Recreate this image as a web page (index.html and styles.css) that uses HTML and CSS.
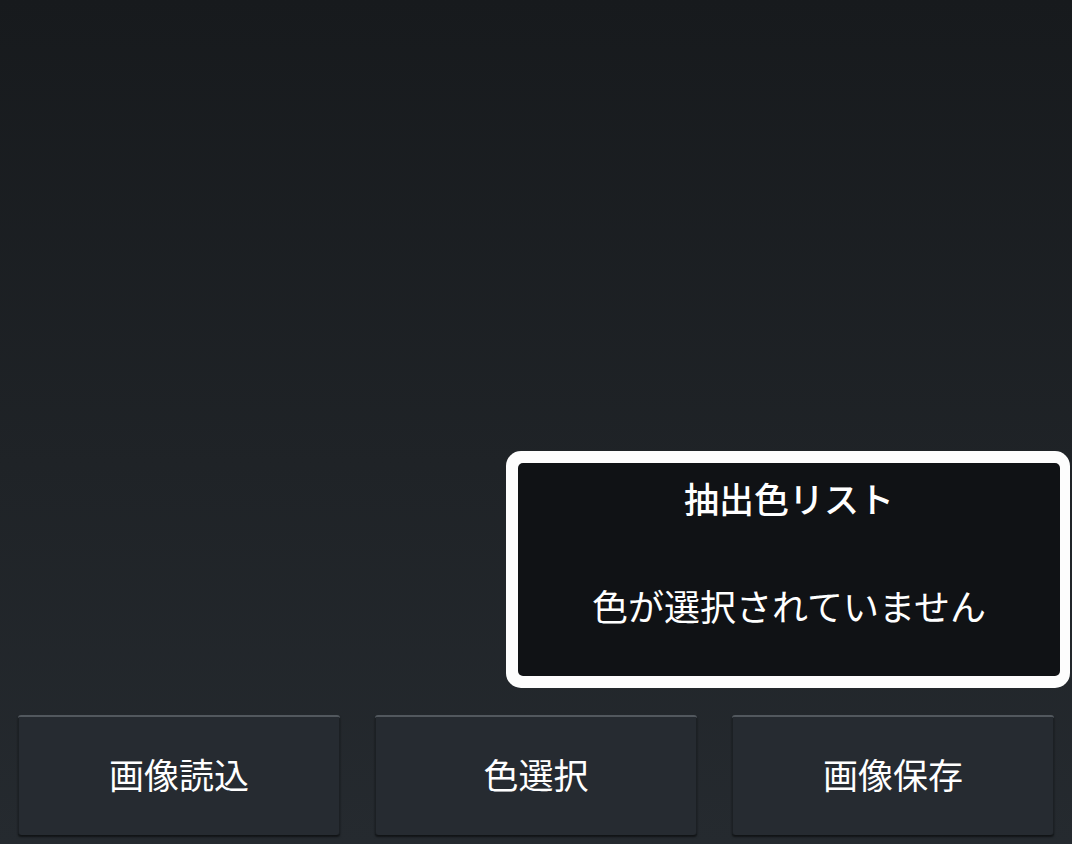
FILE: index.html
```html
<!DOCTYPE html>
<html lang="ja">
<head>
<meta charset="utf-8">
<title>抽出色リスト</title>
<link rel="stylesheet" href="styles.css">
</head>
<body>
<div class="app">
  <div class="canvas"></div>
  <section class="panel">
    <div class="panel-inner">
      <h2 class="panel-title">抽出色リスト</h2>
      <p class="panel-msg">色が選択されていません</p>
    </div>
  </section>
  <nav class="actions">
    <button class="btn">画像読込</button>
    <button class="btn">色選択</button>
    <button class="btn">画像保存</button>
  </nav>
</div>
</body>
</html>
```
FILE: styles.css
```css
* { box-sizing: border-box; }
html, body {
  margin: 0;
  padding: 0;
  width: 1072px;
  height: 844px;
  overflow: hidden;
}
body {
  background: linear-gradient(180deg, #171a1d 0%, #1f2327 55%, #252a2f 100%);
  font-family: "Noto Sans CJK JP", "Noto Sans", sans-serif;
  color: #ffffff;
}
.app {
  display: flex;
  flex-direction: column;
  height: 844px;
}
.canvas {
  flex: 1;
}
.panel {
  align-self: flex-end;
  width: 564px;
  height: 237px;
  margin-right: 2px;
  background: #fdfdfd;
  border-radius: 15px;
  padding: 12px 10px 12px 12px;
}
.panel-inner {
  height: 100%;
  background: #101215;
  border-radius: 5px;
  padding-top: 10px;
  text-align: center;
}
.panel-title {
  margin: 0;
  font-size: 35px;
  line-height: 50px;
  font-weight: 500;
}
.panel-msg {
  margin: 57px 0 0;
  font-size: 36px;
  line-height: 50px;
  font-weight: 400;
}
.actions {
  display: flex;
  gap: 35px;
  padding: 27px 18px 9px;
}
.btn {
  flex: 1;
  height: 120px;
  background: #262b31;
  border: none;
  border-top: 2px solid #52585e;
  border-radius: 3px;
  box-shadow: 0 2px 2px rgba(0, 0, 0, 0.55), inset 1px 0 0 rgba(0,0,0,0.25), inset -1px 0 0 rgba(0,0,0,0.25);
  color: #ffffff;
  font-family: "Noto Sans CJK JP", "Noto Sans", sans-serif;
  font-size: 35px;
  font-weight: 400;
  padding: 0 0 6px;
}
```
